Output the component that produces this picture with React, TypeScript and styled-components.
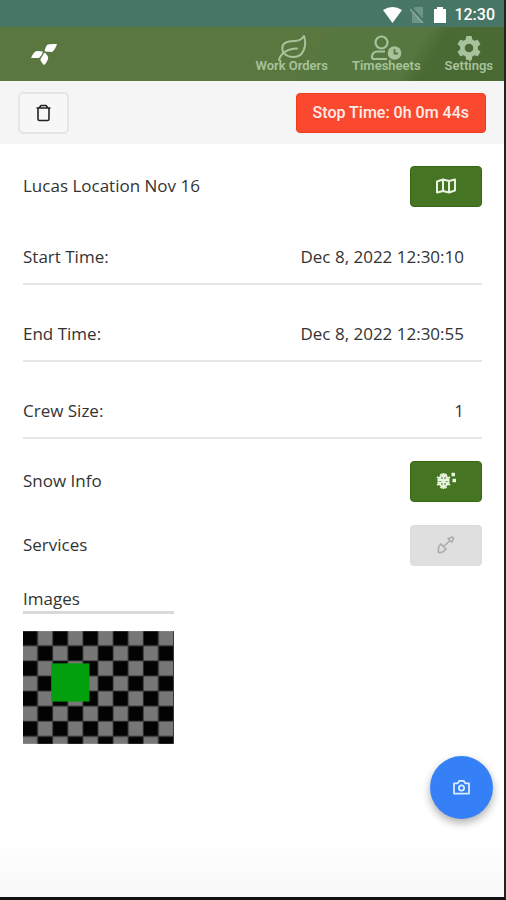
import React from "react";
import styled, { createGlobalStyle } from "styled-components";

const GlobalStyle = createGlobalStyle`
  * { box-sizing: border-box; }
  body { margin: 0; background: #fff; }
  button { font: inherit; cursor: pointer; }
`;

const Screen = styled.div`
  display: flex;
  flex-direction: column;
  min-height: 100vh;
  border-right: 2px solid #222;
  border-bottom: 3px solid #111;
  background: linear-gradient(#fff calc(100% - 60px), #f8f8f8);
  color: #333;
  font-family: "Open Sans", "Noto Sans", sans-serif;
  font-size: 17px;
  line-height: 24px;
`;

const StatusBar = styled.div`
  display: flex;
  align-items: center;
  justify-content: flex-end;
  height: 27px;
  padding: 2px 9px 0 0;
  background: #477666;
  color: #fff;
  font: 500 16px/24px Roboto, sans-serif;
`;

const StatusIcon = styled.svg<{ $gap: number }>`
  flex: none;
  margin-right: ${(p) => p.$gap}px;
`;

const Header = styled.header`
  display: flex;
  align-items: center;
  justify-content: space-between;
  height: 54px;
  padding: 0 11px 0 31px;
  background:
    linear-gradient(122deg, transparent 80%, #496a33 84%),
    linear-gradient(122deg, transparent 62%, #56773f 62%),
    #5a7740;
`;

const Nav = styled.nav`
  display: flex;
  gap: 24px;
`;

const NavLink = styled.a`
  display: flex;
  flex-direction: column;
  align-items: center;
  color: #a8c39b;
  font: 600 13px/14px Roboto, sans-serif;
  text-decoration: none;
  svg { margin-bottom: -2px; }
`;

const Toolbar = styled.div`
  display: flex;
  align-items: center;
  justify-content: space-between;
  height: 63px;
  padding: 0 18px;
  background: #f5f5f5;
`;

const TrashButton = styled.button`
  display: grid;
  place-items: center;
  width: 51px;
  height: 42px;
  padding: 0;
  border: 2px solid #e5e5e5;
  border-radius: 5px;
  background: #f7f7f7;
  color: #222;
`;

const StopButton = styled.button`
  height: 40px;
  padding: 0 16px;
  border: 1px solid #f03c18;
  border-radius: 4px;
  background: #fb492f;
  color: #ffece8;
  && { font: 500 16px/24px Roboto, sans-serif; }
`;

const Details = styled.main`
  padding: 10px 22px 0 23px;
`;

const ActionRow = styled.div`
  display: flex;
  align-items: center;
  justify-content: space-between;
  height: 64px;
`;

const ActionButton = styled.button`
  display: grid;
  place-items: center;
  width: 72px;
  height: 41px;
  padding: 0;
  border: 1px solid #36690f;
  border-radius: 4px;
  background: #457423;
  color: #e8f4df;
  &:disabled {
    border-color: #dcdcdc;
    background: #dfdfdf;
    color: #adadad;
    cursor: default;
  }
`;

const Fields = styled.dl`
  margin: 0 0 10px;
`;

const Field = styled.div`
  display: flex;
  align-items: flex-end;
  justify-content: space-between;
  height: 77px;
  padding: 0 18px 14px 0;
  border-bottom: 2px solid #e6e6e6;
  &:first-child { height: 67px; }
  dd { margin: 0; }
`;

const Gallery = styled.section`
  width: 151px;
  padding-top: 10px;
  svg { display: block; }
`;

const GalleryTitle = styled.h2`
  margin: 0 0 17px;
  border-bottom: 3px solid #d9d9d9;
  font-size: 17px;
  font-weight: 400;
  line-height: 24px;
`;

const CameraButton = styled.button`
  position: fixed;
  right: 13px;
  bottom: 81px;
  display: grid;
  place-items: center;
  width: 63px;
  height: 63px;
  padding: 0;
  border: 0;
  border-radius: 50%;
  background: #3580f6;
  color: #d9edff;
  box-shadow: 0 4px 9px rgba(0, 0, 0, 0.32);
`;

const Logo = () => (
  <svg width="27" height="23" viewBox="0 0 27 23" fill="#fff" aria-hidden="true">
    <path d="M16 2Q18 .7 26 1Q24 7 21 9L14 8.500Q13 7 16 2Z" />
    <path d="M0 15Q3 8 6 8L12 8.500Q11 13 8 15Z" />
    <path d="M13.500 9.500Q18 13 17 16Q15 21 13 22Q9 18 9.500 16Z" />
  </svg>
);

const Leaf = () => (
  <svg width="30" height="26" viewBox="0 0 30 26" fill="none" stroke="currentColor" strokeWidth="2" strokeLinecap="round" strokeLinejoin="round" aria-hidden="true">
    <path d="M2 25C4 18 9 14 20 13.500M6 17C3 8 10 6 18 6C23 6 25 4 27 1C30 10 27 22 17 22C12 22 9 21 7 18" />
  </svg>
);

const PersonClock = () => (
  <svg width="32" height="26" viewBox="0 0 32 26" aria-hidden="true">
    <g fill="none" stroke="currentColor" strokeWidth="2.200">
      <circle cx="11.500" cy="7.500" r="6" />
      <path d="M17 24H4Q2 24 2 22Q2 16.500 8 16.500H15" />
    </g>
    <circle cx="24.500" cy="18" r="6.800" fill="currentColor" />
    <path d="M24.500 14V18.500H28" fill="none" stroke="#56773f" strokeWidth="1.800" />
  </svg>
);

const Gear = () => (
  <svg width="26" height="26" viewBox="0 0 24 24" fill="currentColor" aria-hidden="true">
    <path fillRule="evenodd" d="M9.500 1h5l.6 3.100 2 1.200 3-1 2.500 4.200-2.400 2.100v2.800l2.400 2.100-2.500 4.200-3-1-2 1.200-.6 3.100h-5l-.6-3.100-2-1.200-3 1-2.500-4.200 2.400-2.100v-2.800L1.400 8.500l2.500-4.200 3 1 2-1.200ZM12 8a4 4 0 1 0 0 8 4 4 0 0 0 0-8Z" />
  </svg>
);

const Trash = () => (
  <svg width="15" height="18" viewBox="0 0 15 18" fill="none" stroke="currentColor" strokeWidth="1.600" strokeLinejoin="round" aria-hidden="true">
    <path d="M.5 4H14.500M3 4L5 1.500H10L12 4M2 4V15Q2 16.500 3.500 16.500H11.500Q13 16.500 13 15V4" />
  </svg>
);

const MapIcon = () => (
  <svg width="20" height="16" viewBox="0 0 20 16" fill="none" stroke="currentColor" strokeWidth="2" strokeLinejoin="round" aria-hidden="true">
    <path d="M1 3.500L7 1.500L13 3L19 1.500V12.500L13 14.500L7 13L1 14.500ZM7 1.500V13M13 3V14.500" />
  </svg>
);

const Snowflake = () => (
  <svg width="20" height="18" viewBox="0 0 20 18" fill="none" stroke="currentColor" strokeWidth="2" aria-hidden="true">
    <path d="M7.500 1V17M1 5L14 13M14 5L1 13M4.500 2L7.500 5L10.500 2M4.500 16L7.500 13L10.500 16M1.500 8.500L4.500 7L4.500 3.500M13.500 8.500L10.500 7V3.500M1.500 10L4.500 11V14M13.500 10L10.500 11V14" />
    <path d="M15.500 2.500H19M16.500 8.500H20" strokeWidth="3.500" />
  </svg>
);

const Shovel = () => (
  <svg width="18" height="18" viewBox="0 0 18 18" fill="none" stroke="currentColor" strokeWidth="1.700" strokeLinejoin="round" aria-hidden="true">
    <path d="M4 8L9 13L7 15Q5 17 1.500 16.500Q1 13 2 10ZM6 11L13 4.500M11 2.500L15.500 1L16.500 2.500L15 6L13 5Z" />
  </svg>
);

const Camera = () => (
  <svg width="17" height="15" viewBox="0 0 18 16" fill="none" stroke="currentColor" strokeWidth="1.900" strokeLinejoin="round" aria-hidden="true">
    <path d="M1 3.500H5L6.500 1H11.500L13 3.500H17V14.500H1Z" />
    <circle cx="9" cy="8.500" r="2.800" />
  </svg>
);

const Photo = () => (
  <svg width="151" height="113" viewBox="0 0 150 112" role="img" aria-label="Attached photo">
    <defs>
      <pattern id="checks" width="30" height="30" patternUnits="userSpaceOnUse">
        <rect width="30" height="30" fill="#383838" />
        <path d="M0 0H14V14H0ZM15 15H29V29H15Z" fill="#030303" />
        <path d="M15 0H29V14H15ZM0 15H14V29H0Z" fill="#777" />
      </pattern>
    </defs>
    <rect width="150" height="112" fill="url(#checks)" />
    <rect x="28" y="32" width="38" height="38" fill="#02a00d" />
  </svg>
);

const fields = [
  { label: "Start Time:", value: "Dec 8, 2022 12:30:10" },
  { label: "End Time:", value: "Dec 8, 2022 12:30:55" },
  { label: "Crew Size:", value: "1" },
];

export default function App() {
  return (
    <Screen>
      <GlobalStyle />
      <StatusBar>
        <StatusIcon $gap={8} width="19" height="16" viewBox="0 0 19 16" fill="#fff" aria-hidden="true">
          <path d="M0 3Q9.500-3 19 3L9.500 16Z" />
        </StatusIcon>
        <StatusIcon $gap={9} width="15" height="16" viewBox="0 0 15 16" aria-hidden="true">
          <path d="M5 0H13V16H2V4Z" fill="#6f9588" />
          <path d="M1 1L14 15" stroke="#477666" strokeWidth="3" />
          <path d="M0 2L13 16" stroke="#8cab9f" strokeWidth="1.500" />
        </StatusIcon>
        <StatusIcon $gap={8} width="12" height="16" viewBox="0 0 12 16" fill="#fff" aria-hidden="true">
          <path d="M3 0H9V2H12V16H0V2H3Z" />
        </StatusIcon>
        <span>12:30</span>
      </StatusBar>
      <Header>
        <Logo />
        <Nav>
          <NavLink href="#work-orders"><Leaf />Work Orders</NavLink>
          <NavLink href="#timesheets"><PersonClock />Timesheets</NavLink>
          <NavLink href="#settings"><Gear />Settings</NavLink>
        </Nav>
      </Header>
      <Toolbar>
        <TrashButton aria-label="Delete"><Trash /></TrashButton>
        <StopButton>Stop Time: 0h 0m 44s</StopButton>
      </Toolbar>
      <Details>
        <ActionRow>
          <span>Lucas Location Nov 16</span>
          <ActionButton aria-label="Open map"><MapIcon /></ActionButton>
        </ActionRow>
        <Fields>
          {fields.map((f) => (
            <Field key={f.label}>
              <dt>{f.label}</dt>
              <dd>{f.value}</dd>
            </Field>
          ))}
        </Fields>
        <ActionRow>
          <span>Snow Info</span>
          <ActionButton aria-label="Snow info"><Snowflake /></ActionButton>
        </ActionRow>
        <ActionRow>
          <span>Services</span>
          <ActionButton aria-label="Services" disabled><Shovel /></ActionButton>
        </ActionRow>
        <Gallery>
          <GalleryTitle>Images</GalleryTitle>
          <Photo />
        </Gallery>
      </Details>
      <CameraButton aria-label="Take photo"><Camera /></CameraButton>
    </Screen>
  );
}
